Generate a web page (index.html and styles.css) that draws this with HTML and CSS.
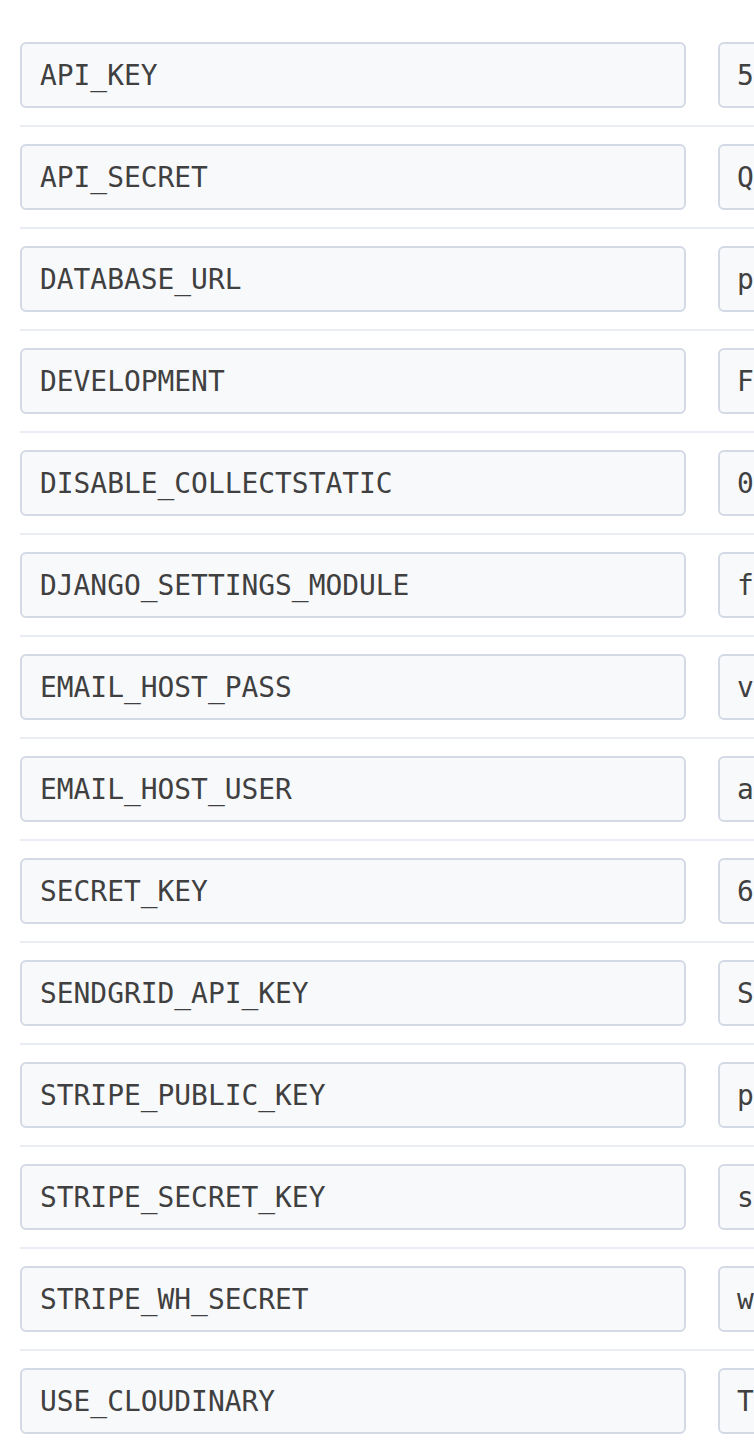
FILE: index.html
```html
<!DOCTYPE html>
<html>
<head>
<meta charset="utf-8">
<link rel="stylesheet" href="styles.css">
</head>
<body>
<div class="list">
  <div class="row"><div class="field key">API_KEY</div><div class="field val">5</div></div>
  <div class="row"><div class="field key">API_SECRET</div><div class="field val">Q</div></div>
  <div class="row"><div class="field key">DATABASE_URL</div><div class="field val">p</div></div>
  <div class="row"><div class="field key">DEVELOPMENT</div><div class="field val">F</div></div>
  <div class="row"><div class="field key">DISABLE_COLLECTSTATIC</div><div class="field val">0</div></div>
  <div class="row"><div class="field key">DJANGO_SETTINGS_MODULE</div><div class="field val">f</div></div>
  <div class="row"><div class="field key">EMAIL_HOST_PASS</div><div class="field val">v</div></div>
  <div class="row"><div class="field key">EMAIL_HOST_USER</div><div class="field val">a</div></div>
  <div class="row"><div class="field key">SECRET_KEY</div><div class="field val">6</div></div>
  <div class="row"><div class="field key">SENDGRID_API_KEY</div><div class="field val">S</div></div>
  <div class="row"><div class="field key">STRIPE_PUBLIC_KEY</div><div class="field val">p</div></div>
  <div class="row"><div class="field key">STRIPE_SECRET_KEY</div><div class="field val">s</div></div>
  <div class="row"><div class="field key">STRIPE_WH_SECRET</div><div class="field val">w</div></div>
  <div class="row last"><div class="field key">USE_CLOUDINARY</div><div class="field val">T</div></div>
</div>
</body>
</html>
```
FILE: styles.css
```css
html, body {
  margin: 0;
  padding: 0;
  background: #ffffff;
  overflow: hidden;
}
.list {
  padding: 42px 0 0 20px;
  overflow: hidden;
}
.row {
  display: flex;
  gap: 32px;
  padding-bottom: 17px;
  margin-bottom: 17px;
  border-bottom: 2px solid #e9ecf2;
}
.row.last {
  border-bottom: none;
}
.field {
  box-sizing: border-box;
  height: 66px;
  border: 2px solid #d3d9e5;
  border-radius: 6px;
  background: #f8f9fb;
  font-family: "DejaVu Sans Mono", monospace;
  font-size: 27.9px;
  color: #404040;
  display: flex;
  align-items: center;
  padding-left: 18px;
  white-space: nowrap;
  overflow: hidden;
}
.key {
  width: 666px;
  flex: none;
}
.val {
  width: 300px;
  flex: none;
  padding-left: 17px;
}
```
